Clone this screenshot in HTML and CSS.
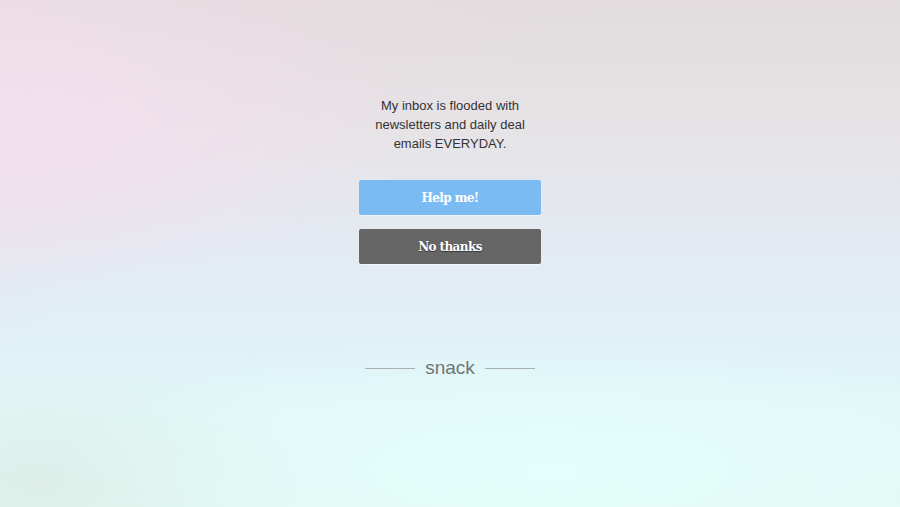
FILE: index.html
```html
<!DOCTYPE html>
<html>
<head>
<meta charset="utf-8">
<link rel="stylesheet" href="styles.css">
</head>
<body>
<main class="page">
  <section class="prompt">
    <p class="message">My inbox is flooded with<br>newsletters and daily deal<br>emails EVERYDAY.</p>
    <div class="actions">
      <button class="btn btn-help">Help me!</button>
      <button class="btn btn-no">No thanks</button>
    </div>
  </section>
  <footer class="brand">
    <span class="rule"></span>
    <span class="brand-name">snack</span>
    <span class="rule"></span>
  </footer>
</main>
</body>
</html>
```
FILE: styles.css
```css
html, body {
  margin: 0;
  padding: 0;
  height: 100%;
}
body {
  font-family: "Liberation Sans", Arial, sans-serif;
  background:
    radial-gradient(ellipse 420px 160px at 0px 130px, rgba(245,225,240,0.9), rgba(245,225,240,0) 100%),
    radial-gradient(ellipse 500px 140px at 550px 470px, rgba(228,255,252,0.9), rgba(228,255,252,0) 100%),
    radial-gradient(ellipse 300px 120px at 40px 480px, rgba(220,236,230,0.8), rgba(220,236,230,0) 100%),
    linear-gradient(to bottom right, rgba(236,220,228,0.8) 0%, rgba(236,220,228,0) 35%),
    linear-gradient(to bottom, #e2dcde 0%, #e6e3e6 25%, #e4eaf2 48%, #e0f1f7 68%, #e1f8f8 82%, #e2f9f4 100%);
  overflow: hidden;
}
.page {
  height: 507px;
  display: flex;
  flex-direction: column;
  align-items: center;
}
.prompt {
  display: flex;
  flex-direction: column;
  align-items: center;
  padding-top: 96px;
}
.message {
  margin: 0;
  font-size: 13px;
  line-height: 19px;
  color: #333;
  text-align: center;
}
.actions {
  margin-top: 27px;
  display: flex;
  flex-direction: column;
  gap: 14px;
}
.btn {
  width: 182px;
  height: 35px;
  border: 0;
  border-radius: 2px;
  font-family: "DejaVu Serif", "Liberation Serif", serif;
  font-weight: bold;
  font-size: 12px;
  letter-spacing: -0.6px;
  color: #fff;
  padding: 0;
  cursor: pointer;
}
.btn-help {
  background: #7abbf4;
  box-shadow: 0 1px 1px rgba(255,255,255,0.6);
}
.btn-no {
  background: #666666;
  text-shadow: 0 1px 1px rgba(0,0,0,0.5);
  box-shadow: 0 1px 1px rgba(255,255,255,0.6);
}
.brand {
  margin-top: 93px;
  display: flex;
  align-items: center;
  gap: 10px;
}
.rule {
  width: 50px;
  height: 1px;
  background: #a8b0b2;
}
.brand-name {
  font-size: 19px;
  color: #6f7576;
  line-height: 22px;
  padding-bottom: 1px;
}
```
